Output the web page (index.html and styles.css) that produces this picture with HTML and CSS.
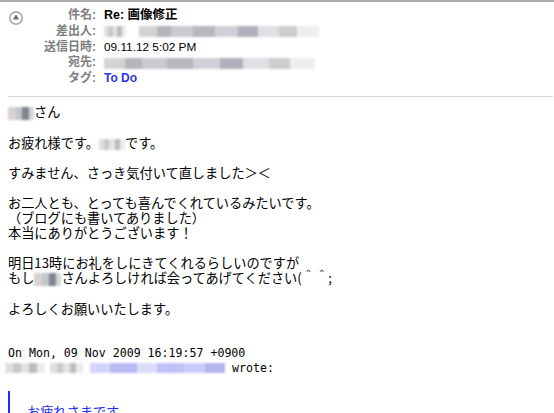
FILE: index.html
```html
<!DOCTYPE html>
<html lang="ja">
<head>
  <meta charset="UTF-8">
  <title>Re: 画像修正</title>
  <link rel="stylesheet" href="styles.css">
</head>
<body>
  <div class="header">
    <svg class="toggle" width="14" height="14" viewBox="0 0 14 14">
      <circle cx="7" cy="7" r="6.2" fill="#fff" stroke="#8a8a8a" stroke-width="1.2"/>
      <path d="M7 3.6 L10.2 8.6 L3.8 8.6 Z" fill="#6e6e6e"/>
    </svg>
    <div class="fields">
      <div class="label">件名:</div>
      <div class="value subject">Re: 画像修正</div>
      <div class="label">差出人:</div>
      <div class="value"><span class="blur g1" style="width:22px"></span><span class="blur g2" style="width:180px;margin-left:13px"></span></div>
      <div class="label">送信日時:</div>
      <div class="value date">09.11.12 5:02 PM</div>
      <div class="label">宛先:</div>
      <div class="value"><span class="blur g2" style="width:211px"></span></div>
      <div class="label">タグ:</div>
      <div class="value tag">To Do</div>
    </div>
  </div>

  <div class="message">
    <p><span class="blur g3" style="width:26px"></span>さん</p>
    <p>お疲れ様です。<span class="blur g1" style="width:26px"></span>です。</p>
    <p>すみません、さっき気付いて直しました＞＜</p>
    <p>お二人とも、とっても喜んでくれているみたいです。<br>（ブログにも書いてありました）<br>本当にありがとうございます！</p>
    <p>明日13時にお礼をしにきてくれるらしいのですが<br>もし<span class="blur g3" style="width:27px"></span>さんよろしければ会ってあげてください(＾＾;</p>
    <p class="last">よろしくお願いいたします。</p>

    <div class="attribution">On Mon, 09 Nov 2009 16:19:57 +0900<br><span class="blur g1" style="width:40px;margin-left:-3px"></span><span class="blur g1" style="width:33px;margin-left:5px"></span><span class="blur blue" style="width:135px;margin-left:7px"></span> wrote:</div>

    <blockquote class="quote">
      <p>お疲れさまです</p>
    </blockquote>
  </div>
</body>
</html>
```

FILE: styles.css
```css
body { margin: 0; background: #fff; color: #000; font-family: "Liberation Sans", "Noto Sans CJK JP", sans-serif; }

.header { border-top: 2px solid #acacac; padding: 6px 0 9px 9px; display: flex; align-items: flex-start; }
.toggle { margin-top: 3px; flex: none; }
.fields { display: grid; grid-template-columns: 73px auto; column-gap: 8px; font-size: 12px; line-height: 15.75px; }
.label { text-align: right; font-weight: bold; color: #7d7d7d; }
.value { white-space: nowrap; }
.subject { font-weight: bold; font-size: 12.5px; }
.date { font-size: 11.8px; }
.tag { font-weight: bold; color: #2f35e0; font-size: 12px; }

.blur { display: inline-block; height: 11px; vertical-align: middle; filter: blur(1px); }
.g1 { background: linear-gradient(90deg, #e0e0e0 0 20%, #c8c8c8 20% 40%, #e4e4e4 40% 60%, #bcbcbc 60% 80%, #ececec 80%); }
.g2 { background: linear-gradient(90deg, #d4d4d4 0 10%, #b4b6bc 10% 18%, #cacad0 18% 30%, #b8b8bc 30% 42%, #d0d0d8 42% 55%, #b0b0ba 55% 66%, #e0e0e4 66% 78%, #cdcdd0 78% 88%, #eeeeee 88%); }
.g3 { height: 13px; background: linear-gradient(90deg, #d8d2ce 0 30%, #c2c6ce 30% 55%, #80848c 55% 80%, #d4d8dc 80%); }
.blue { background: linear-gradient(90deg, #d4d4fa 0 15%, #b8b8f4 15% 35%, #dcdcfb 35% 50%, #c0c0f6 50% 70%, #ccccfa 70% 85%, #b4b4f0 85%); }

.message { margin: 0 1px 0 8px; border-top: 1px solid #d3d3d3; padding-top: 7px; font-family: "Noto Sans CJK JP", sans-serif; font-size: 13.2px; line-height: 15px; }
.message p { margin: 0 0 15px; }
.message p.last { margin-bottom: 30px; }
.attribution { font-family: "DejaVu Sans Mono", monospace; font-size: 11.6px; line-height: 15px; }
.attribution .blur { height: 10px; }
.quote { margin: 15px 0 0; border-left: 2px solid #1a2cf5; padding: 13px 0 0 17px; color: #1a2cf5; }
.quote p { margin: 0; }
```
